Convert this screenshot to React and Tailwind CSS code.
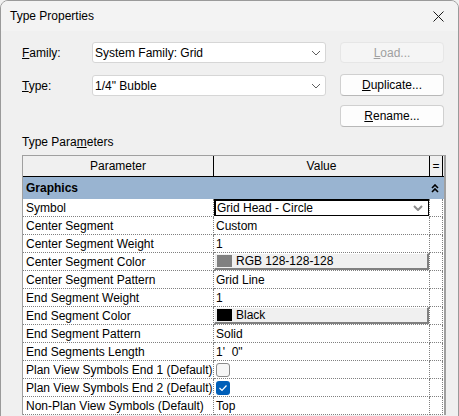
import React from "react";

const font = { fontFamily: '"Liberation Sans", Arial, sans-serif' };

function Chevron() {
  return (
    <svg width="10" height="6" viewBox="0 0 10 6" className="text-[#5f5f5f]">
      <path d="M1 1l4 4 4-4" fill="none" stroke="currentColor" strokeWidth="1" />
    </svg>
  );
}

function Combo({ value, top }) {
  return (
    <div className="flex items-center justify-between w-[234px] h-[21px] bg-white border border-[#d6d6d6] rounded-[3px] pl-[2px] pr-[4px] text-[12px]">
      <span>{value}</span>
      <Chevron />
    </div>
  );
}

function Btn({ children, disabled }) {
  return (
    <div
      className={
        disabled
          ? "flex items-center justify-center w-[104px] h-[21px] rounded-[4px] border border-[#e6e6e6] bg-[#f5f5f5] text-[#a0a0a0] text-[12px]"
          : "flex items-center justify-center w-[104px] h-[22px] rounded-[4px] border border-[#d0d0d0] border-b-[#b8b8b8] bg-[#fdfdfd] text-[12px]"
      }
    >
      {children}
    </div>
  );
}

const rows = [
  { name: "Symbol", kind: "combo", value: "Grid Head - Circle" },
  { name: "Center Segment", value: "Custom" },
  { name: "Center Segment Weight", value: "1" },
  { name: "Center Segment Color", kind: "color", swatch: "bg-[#808080]", value: "RGB 128-128-128" },
  { name: "Center Segment Pattern", value: "Grid Line" },
  { name: "End Segment Weight", value: "1" },
  { name: "End Segment Color", kind: "color", swatch: "bg-black", value: "Black" },
  { name: "End Segment Pattern", value: "Solid" },
  { name: "End Segments Length", value: "1'  0\"" },
  { name: "Plan View Symbols End 1 (Default)", kind: "check", checked: false },
  { name: "Plan View Symbols End 2 (Default)", kind: "check", checked: true },
  { name: "Non-Plan View Symbols (Default)", value: "Top" },
];

function ValueCell({ row }) {
  if (row.kind === "combo") {
    return (
      <div className="w-[216px] h-[18px] border-r border-dotted border-[#808080] shrink-0">
        <div className="flex items-center justify-between h-[17px] w-[215px] bg-white border border-black border-t-2 border-l-2 pl-[1px] pr-[5px]">
          <span className="leading-[14px]">{row.value}</span>
          <svg width="10" height="6" viewBox="0 0 10 6">
            <path d="M1 1l4 4 4-4" fill="none" stroke="#8c8c8c" strokeWidth="2" />
          </svg>
        </div>
      </div>
    );
  }
  if (row.kind === "color") {
    return (
      <div className="w-[216px] h-[18px] border-r border-dotted border-[#808080] shrink-0 border-b">
        <div className="flex items-center h-[17px] w-[215px] bg-[#f0f0f0] border border-t-white border-l-white border-r-[#808080] border-b-[#808080] border-r-2 border-b-2 pl-[2px] gap-[4px]">
          <div className={`w-[15px] h-[12px] ${row.swatch}`} />
          <span>{row.value}</span>
        </div>
      </div>
    );
  }
  if (row.kind === "check") {
    return (
      <div className="flex items-center w-[216px] h-[18px] border-r border-b border-dotted border-[#808080] shrink-0 pl-[2px]">
        {row.checked ? (
          <div className="flex items-center justify-center w-[14px] h-[14px] rounded-[3px] bg-[#005fb8]">
            <svg width="10" height="8" viewBox="0 0 10 8">
              <path d="M1.5 4l2.5 2.5 4.5-5" fill="none" stroke="white" strokeWidth="1.2" />
            </svg>
          </div>
        ) : (
          <div className="w-[14px] h-[14px] rounded-[3px] border border-[#8a8a8a] bg-[#f6f6f6]" />
        )}
      </div>
    );
  }
  return (
    <div className="flex items-center w-[216px] h-[18px] border-r border-b border-dotted border-[#808080] shrink-0 pl-[2px]">
      <span className="whitespace-pre">{row.value}</span>
    </div>
  );
}

export default function App() {
  return (
    <div style={font} className="w-[459px] h-[416px] overflow-hidden bg-[#f0f0f0] text-black">
      <div className="w-[459px] h-[430px] border border-[#9a9a9a] rounded-t-[8px] overflow-hidden bg-[#f0f0f0]">
        {/* title bar */}
        <div className="flex items-center justify-between h-[30px] bg-[#f3f3f3] pl-[9px] pr-[14px]">
          <span className="text-[12px]">Type Properties</span>
          <svg width="11" height="11" viewBox="0 0 11 11">
            <path d="M0.5 0.5l10 10M10.5 0.5l-10 10" stroke="#1a1a1a" strokeWidth="1" />
          </svg>
        </div>

        <div className="pl-[21px] pt-[11px] text-[12px]">
          <div className="flex items-start">
            <div className="w-[70px] h-[21px] flex items-center">
              <span><u>F</u>amily:</span>
            </div>
            <Combo value="System Family: Grid" />
            <div className="ml-[14px]">
              <Btn disabled><span><u>L</u>oad...</span></Btn>
            </div>
          </div>
          <div className="flex items-start mt-[11px]">
            <div className="w-[70px] h-[21px] flex items-center mt-[1px]">
              <span><u>T</u>ype:</span>
            </div>
            <div className="mt-[1px]">
              <Combo value={'1/4" Bubble'} />
            </div>
            <div className="ml-[14px]">
              <Btn><span><u>D</u>uplicate...</span></Btn>
            </div>
          </div>
          <div className="flex mt-[9px] pl-[318px]">
            <Btn><span><u>R</u>ename...</span></Btn>
          </div>

          <div className="mt-[7px] h-[16px] leading-[16px]">
            Type Para<u>m</u>eters
          </div>

          {/* table */}
          <div className="mt-[5px] w-[424px] border-l border-t border-r-2 border-[#a0a0a0]">
            <div className="flex h-[21px] bg-[#f0f0f0] border-b border-black">
              <div className="w-[191px] border-r border-black flex items-center justify-center shrink-0">Parameter</div>
              <div className="w-[216px] border-r border-black flex items-center justify-center shrink-0">Value</div>
              <div className="w-[13px] border-r border-black flex items-center justify-center shrink-0">=</div>
            </div>
            <div className="flex items-center justify-between h-[22px] bg-[#99b4d1] pl-[3px] pr-[5px]">
              <span className="font-bold">Graphics</span>
              <svg width="8" height="9" viewBox="0 0 8 9">
                <path d="M1 4l3-3 3 3M1 8l3-3 3 3" fill="none" stroke="black" strokeWidth="1.6" />
              </svg>
            </div>
            {rows.map((row) => (
              <div key={row.name} className="flex h-[18px] bg-white">
                <div className="flex items-center w-[191px] h-[18px] border-r border-b border-dotted border-[#808080] pl-[3px] shrink-0 whitespace-nowrap">
                  {row.name}
                </div>
                <ValueCell row={row} />
                <div className="w-[13px] h-[18px] border-r border-b border-dotted border-[#808080] shrink-0" />
              </div>
            ))}
          </div>
        </div>
      </div>
    </div>
  );
}
